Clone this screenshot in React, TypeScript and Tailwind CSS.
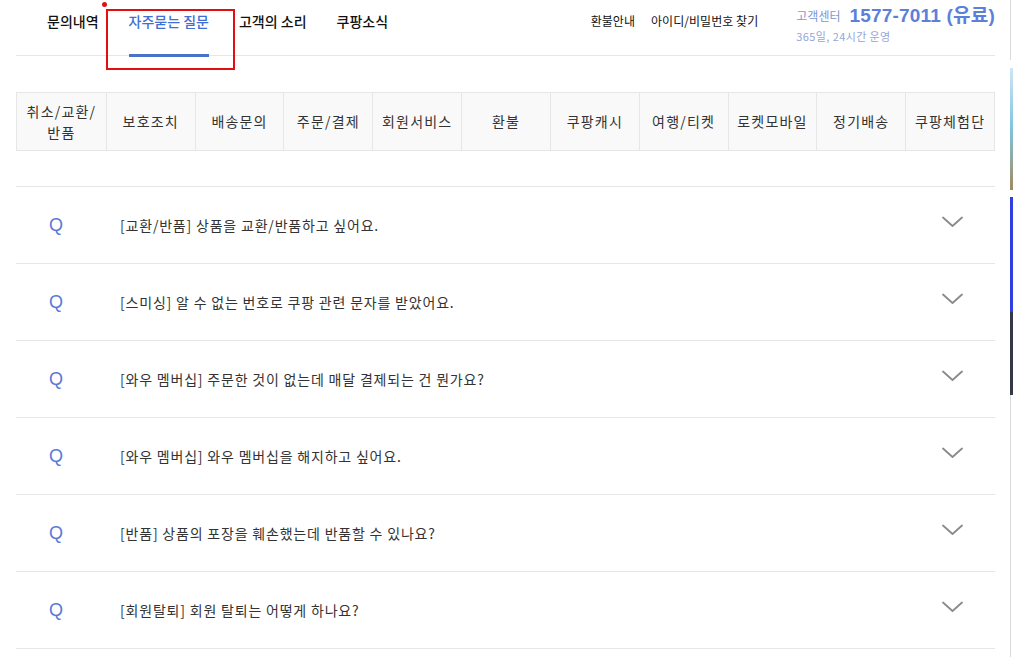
const categories = [
  "취소/교환/\n반품",
  "보호조치",
  "배송문의",
  "주문/결제",
  "회원서비스",
  "환불",
  "쿠팡캐시",
  "여행/티켓",
  "로켓모바일",
  "정기배송",
  "쿠팡체험단",
];

const faqs = [
  "[교환/반품] 상품을 교환/반품하고 싶어요.",
  "[스미싱] 알 수 없는 번호로 쿠팡 관련 문자를 받았어요.",
  "[와우 멤버십] 주문한 것이 없는데 매달 결제되는 건 뭔가요?",
  "[와우 멤버십] 와우 멤버십을 해지하고 싶어요.",
  "[반품] 상품의 포장을 훼손했는데 반품할 수 있나요?",
  "[회원탈퇴] 회원 탈퇴는 어떻게 하나요?",
];

function Chevron() {
  return (
    <svg width="21" height="12" viewBox="0 0 21 12" fill="none" aria-hidden="true">
      <polyline points="1,1.5 10.5,10 20,1.5" stroke="#8a8a8a" strokeWidth="1.8" strokeLinecap="round" strokeLinejoin="round" />
    </svg>
  );
}

export default function App() {
  return (
    <div className="relative flex min-h-[657px] w-[1013px] bg-white font-['Noto_Sans_CJK_KR','Noto_Sans',sans-serif] text-[#333]">
      <main className="ml-4 w-[979px]">
        <header className="flex h-[56px] items-start border-b border-[#e6e6e6]">
          <nav className="ml-[31px] flex h-full items-start gap-[30px] pt-[10px] text-[14px] font-medium text-[#111]">
            <a className="leading-[22px]">문의내역</a>
            <a className="relative h-full leading-[22px] text-[#3f6fd1]">
              자주묻는 질문
              <span className="absolute bottom-[-2px] left-0 right-0 h-[3px] bg-[#4a72c6]" />
            </a>
            <a className="leading-[22px]">고객의 소리</a>
            <a className="leading-[22px]">쿠팡소식</a>
          </nav>
          <div className="ml-auto flex items-start pt-[12px] text-[12px] tracking-[0.05px] text-[#111]">
            <a className="leading-[18px]">환불안내</a>
            <a className="ml-4 leading-[18px]">아이디/비밀번호 찾기</a>
          </div>
          <div className="ml-[38px] pt-[3px]">
            <div className="flex items-center">
              <span className="text-[12px] text-[#7f96d6]">고객센터</span>
              <span className="ml-[9px] font-['Liberation_Sans','Noto_Sans_CJK_KR',sans-serif] text-[19px] font-bold leading-[25px] tracking-[0.2px] text-[#5b80db]">
                1577-7011 (유료)
              </span>
            </div>
            <div className="mt-[1px] text-[11px] leading-[14px] tracking-[0.4px] text-[#94a6d8]">365일, 24시간 운영</div>
          </div>
        </header>

        <div className="mt-[36px] grid h-[59px] grid-cols-11 border border-[#e6e6e6] bg-[#f9f9f9]">
          {categories.map((c, i) => (
            <div
              key={c}
              className={`flex items-center justify-center whitespace-pre-line text-center text-[14px] leading-[21px] tracking-[1.2px] text-[#333] ${i > 0 ? "border-l border-[#e6e6e6]" : ""}`}
            >
              {c}
            </div>
          ))}
        </div>

        <ul className="mt-[35px] border-t border-[#e6e6e6]">
          {faqs.map((q) => (
            <li key={q} className="flex h-[77px] items-center border-b border-[#e6e6e6]">
              <span className="ml-[33px] w-[71px] font-['Liberation_Sans',sans-serif] text-[18px] font-light text-[#5a78d6]">Q</span>
              <span className="text-[14px] tracking-[0.8px] text-[#333]">{q}</span>
              <span className="ml-auto mr-[32px] mt-[-6px]">
                <Chevron />
              </span>
            </li>
          ))}
        </ul>
      </main>

      <aside className="ml-auto flex w-[3px] flex-col">
        <div className="h-[60px] border-l border-[#d9d9d9]" />
        <div className="mt-[8px] h-[122px] bg-gradient-to-b from-[#cfe6f2] via-[#7ec3df] to-[#9c8a5a]" />
        <div className="mt-[7px] h-[115px] bg-[#2f3fe0]" />
        <div className="h-[83px] bg-[#333a45]" />
        <div className="flex-1 border-l border-[#d9d9d9]" />
      </aside>

      <div className="pointer-events-none absolute left-[106px] top-[9px] h-[61px] w-[129px] border-2 border-[#e01010]" />
      <div className="pointer-events-none absolute left-[102px] top-[2px] h-[5px] w-[5px] rounded-full bg-[#e01010]" />
    </div>
  );
}
